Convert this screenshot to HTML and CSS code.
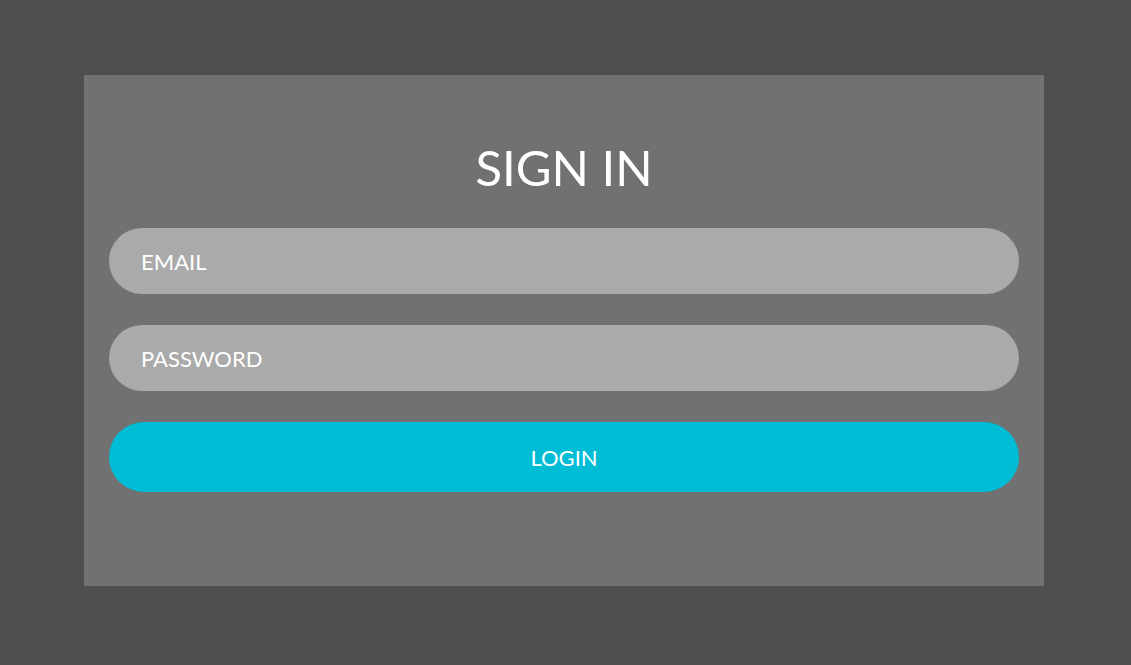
FILE: index.html
```html
<!DOCTYPE html>
<html>
<head>
<meta charset="utf-8">
<link rel="stylesheet" href="styles.css">
</head>
<body>
<div class="page">
  <form class="card">
    <h1 class="title">SIGN IN</h1>
    <input class="field" type="email" placeholder="EMAIL">
    <input class="field" type="password" placeholder="PASSWORD">
    <button class="login" type="button">LOGIN</button>
  </form>
</div>
</body>
</html>
```
FILE: styles.css
```css
html, body {
  margin: 0;
  height: 100%;
  background: #4e4e4e;
  font-family: "Lato", "Open Sans", sans-serif;
}
.page {
  padding: 75px 0 0 84px;
}
.card {
  box-sizing: border-box;
  width: 960px;
  height: 511px;
  background: #717171;
  padding: 0 25px;
  display: flex;
  flex-direction: column;
}
.title {
  margin: 0;
  height: 153px;
  box-sizing: border-box;
  padding-top: 64px;
  text-align: center;
  color: #fff;
  font-weight: 400;
  font-size: 49px;
  line-height: 56px;
}
.field {
  box-sizing: border-box;
  height: 66px;
  border: none;
  border-radius: 33px;
  background: #aaaaaa;
  padding: 0 32px;
  margin-bottom: 31px;
  font-family: inherit;
  font-size: 22px;
  color: #fff;
  outline: none;
}
.field::placeholder {
  color: #fff;
  opacity: 1;
}
.login {
  height: 70px;
  border: none;
  border-radius: 35px;
  background: #00bcd4;
  color: #fff;
  font-family: inherit;
  font-size: 22px;
  padding: 0;
}
```
